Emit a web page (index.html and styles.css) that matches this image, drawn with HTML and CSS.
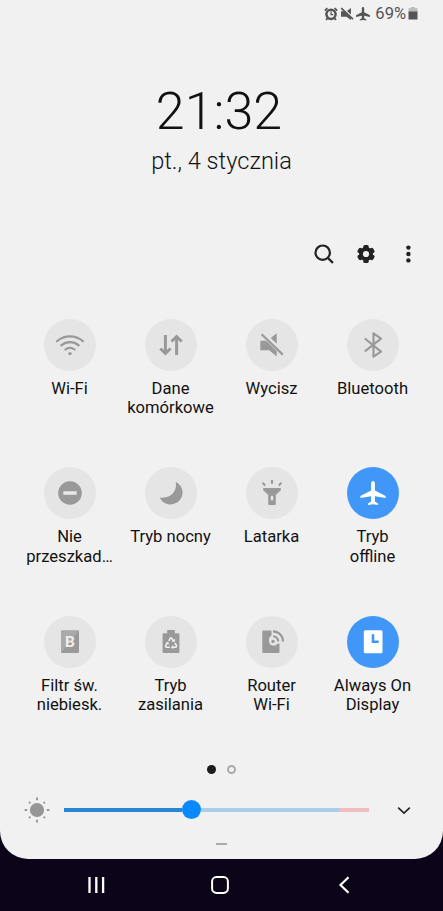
FILE: index.html
```html
<!DOCTYPE html>
<html lang="pl">
<head>
<meta charset="utf-8">
<title>Szybkie ustawienia</title>
<link rel="stylesheet" href="styles.css">
</head>
<body>
<main class="panel">
  <header class="status">
    <svg width="14" height="14" viewBox="0 0 14 14"><circle cx="7" cy="7.3" r="4.6" fill="none" stroke="#555" stroke-width="2.5"/><path d="M.8 3.7 3.4 1.2M13.2 3.7l-2.6-2.5M3.4 11.3l-1.4 1.5M10.6 11.3l1.4 1.5" stroke="#555" stroke-width="1.8"/><path d="M7 4.6v3h2.2" fill="none" stroke="#555" stroke-width="1.2"/></svg>
    <svg width="14" height="14" viewBox="0 0 14 14"><path d="M1 4.3h3l7 7V13L6.5 9.7H1zM7 4l4-3v6.5z" fill="#555"/><path d="M1.2 1.2 13 12.2" stroke="#555" stroke-width="1.7"/></svg>
    <svg width="14" height="14" viewBox="13 13 26 26"><path d="M26 13c-1.5 0-2.2 1.2-2.2 2.8v7.1L13 28.4v3l10.8-2v4.5L20 36.1v2.2l6-1 6 1v-2.2l-3.8-2.2v-4.5l10.8 2v-3l-10.8-5.5v-7.1c0-1.6-.7-2.8-2.2-2.8z" fill="#555"/></svg>
    <span class="percent">69%</span>
    <svg class="battery" width="10" height="13" viewBox="0 0 10 13"><path d="M3 0h4v1.3h2.5V5h-9V1.3H3z" fill="#bbb"/><path d="M.5 4.5h9v8h-9z" fill="#555"/></svg>
  </header>
  <div class="clock">21:32</div>
  <div class="date">pt., 4 stycznia</div>
  <nav class="tools">
    <svg width="22" height="22" viewBox="0 0 22 22" fill="none" stroke="#222" stroke-width="2.2"><circle cx="9.7" cy="9.7" r="7.2"/><path d="m14.7 14.7 5.2 5.2"/></svg>
    <svg width="22" height="22" viewBox="0 0 22 22"><g fill="#222"><circle cx="11" cy="11" r="6.9"/><rect x="8.3" y="2.1" width="5.4" height="17.8" rx="1.5"/><rect x="8.3" y="2.1" width="5.4" height="17.8" rx="1.5" transform="rotate(60 11 11)"/><rect x="8.3" y="2.1" width="5.4" height="17.8" rx="1.5" transform="rotate(120 11 11)"/></g><circle cx="11" cy="11" r="3.1" fill="#f1f1f1"/></svg>
    <svg width="22" height="22" viewBox="0 0 22 22" fill="#222"><circle cx="11.4" cy="4.6" r="2.2"/><circle cx="11.4" cy="11" r="2.2"/><circle cx="11.4" cy="17.4" r="2.2"/></svg>
  </nav>
  <section class="tiles">
    <div class="tile"><svg class="icon" viewBox="0 0 52 52"><g fill="none" stroke="#999" stroke-width="2.2" stroke-linecap="round"><path d="M13 22.2c7.3-6.5 18.7-6.5 26 0M17.3 26.3c5-4.3 12.4-4.3 17.4 0M21.4 30.5c2.7-2.2 6.5-2.2 9.2 0"/></g><circle cx="26" cy="34.6" r="1.7" fill="#999"/></svg><span>Wi-Fi</span></div>
    <div class="tile"><svg class="icon" viewBox="0 0 52 52"><path d="M20.4 16v18M15.3 29.5l5.1 5 5.1-5M31.6 36V17.5M26.5 22.5l5.1-5 5.1 5" fill="none" stroke="#999" stroke-width="3"/></svg><span>Dane<br>komórkowe</span></div>
    <div class="tile"><svg class="icon" viewBox="0 0 52 52"><path d="M14.3 21.8h5.9L30.7 32v5.5l-7.4-6.2h-9zM24.8 19l5.9-4.8v10.5z" fill="#999"/><path d="M15.6 15.2 36.8 35.6" stroke="#999" stroke-width="2.2"/></svg><span>Wycisz</span></div>
    <div class="tile"><svg class="icon" viewBox="0 0 52 52"><path d="M17.8 19.5 34 32.6l-7.5 5V14.4l7.5 5.2-16.2 12.7" fill="none" stroke="#999" stroke-width="2.2" stroke-linejoin="round"/></svg><span>Bluetooth</span></div>

    <div class="tile"><svg class="icon" viewBox="0 0 52 52"><circle cx="26" cy="26" r="11.8" fill="#999"/><path d="M19.3 24.2h13.4v3.6H19.3z" fill="#e8e8e8"/></svg><span>Nie<br>przeszkad…</span></div>
    <div class="tile"><svg class="icon" viewBox="0 0 52 52"><path d="M30.7 14.8C35 17 37.6 21 37.6 25.6c0 6.5-5 11.8-11.8 11.8-4.8 0-9-2.6-11.1-7 10 1.7 18.1-5.5 16-15.6z" fill="#999"/></svg><span>Tryb nocny</span></div>
    <div class="tile"><svg class="icon" viewBox="0 0 52 52"><path d="M17.2 21h17.6v2.2l-5 4.7V37q0 1-1 1h-5.6q-1 0-1-1v-9.1l-5-4.7z" fill="#999"/><path d="M16.8 15.6l2.3 3M26 13v3.8M35.2 15.6l-2.3 3" stroke="#999" stroke-width="2.1"/><rect x="24.9" y="28.8" width="2.2" height="4.8" rx="1" fill="#e8e8e8"/></svg><span>Latarka</span></div>
    <div class="tile on"><svg class="icon" viewBox="0 0 52 52"><path d="M26 14c-1.3 0-1.9 1.2-1.9 2.8v6.6L13.4 29v2l10.7-1.7v5.2l-3.2 1.9v1.5l5.1-.7 5.1.7v-1.5l-3.2-1.9v-5.2L38.6 31v-2l-10.7-5.6v-6.6c0-1.6-.6-2.8-1.9-2.8z" fill="#fff"/></svg><span>Tryb<br>offline</span></div>

    <div class="tile"><svg class="icon" viewBox="0 0 52 52"><rect x="17" y="14.5" width="18" height="22.5" rx="1" fill="#999"/><path d="M17 37V15.5q0-1 1-1h17z" fill="#aaa"/><text class="letter" x="26" y="31" text-anchor="middle">B</text></svg><span>Filtr św.<br>niebiesk.</span></div>
    <div class="tile"><svg class="icon" viewBox="0 0 52 52"><path d="M22.2 14h7.6v3.3h3.6q1 0 1 1V36q0 1-1 1H18.6q-1 0-1-1V18.3q0-1 1-1h3.6z" fill="#999"/><path d="M23.8 25l1.3-2.6q.9-1.2 1.8 0l1.4 2.6M30 26.8l1.4 2.8q.4 1.5-1 1.6h-2.8M24.8 31.2h-3.2q-1.4-.4-.9-1.7l1.6-2.8" fill="none" stroke="#eee" stroke-width="1.6"/><path d="M26.5 25.5l3.3.4.4-3.1zM28.2 29v4.3l-2.3-2.1zM20.5 27l2.8-1.3.8 3z" fill="#eee"/></svg><span>Tryb<br>zasilania</span></div>
    <div class="tile"><svg class="icon" viewBox="0 0 52 52"><path d="M17.3 14.4h8.2v5.3c-3.2.8-3.8 8 .2 9.6 2 .8 4.5.3 5.7-1.5h2.1V36q0 1-1 1H17.3q-1 0-1-1V15.4q0-1 1-1z" fill="#999"/><circle cx="27" cy="25.4" r="1.7" fill="#999"/><path d="M27 20.2a5.2 5.2 0 0 1 5.2 5.2M27 15.4a10 10 0 0 1 10 10" fill="none" stroke="#999" stroke-width="2.1"/></svg><span>Router<br>Wi-Fi</span></div>
    <div class="tile on"><svg class="icon" viewBox="0 0 52 52"><rect x="16.8" y="14.3" width="18.7" height="23" rx="1.5" fill="#fff"/><path d="M26 18.2v7.6h5.7" fill="none" stroke="#4197f7" stroke-width="2.6"/></svg><span>Always On<br>Display</span></div>
  </section>
  <div class="pages"><i class="dot current"></i><i class="dot"></i></div>
  <div class="brightness">
    <svg width="26" height="26" viewBox="0 0 26 26"><circle cx="13" cy="13" r="7.1" fill="#969696"/><path d="M13 .6v2.6M13 22.8v2.6M.6 13h2.6M22.8 13h2.6M5 5l1.4 1.4M19.6 19.6 21 21M5 21l1.4-1.4M19.6 6.4 21 5" stroke="#969696" stroke-width="1.9"/></svg>
    <div class="track"><i class="fill"></i><i class="thumb"></i><i class="rest"></i><i class="hot"></i></div>
    <svg class="chevron" width="14" height="10" viewBox="0 0 14 10"><path d="m1.2 2.6 5.8 5.6 5.8-5.6" fill="none" stroke="#222" stroke-width="1.6"/></svg>
  </div>
  <i class="handle"></i>
</main>
<footer class="navbar">
  <svg width="18" height="18" viewBox="0 0 18 18"><path d="M2.5 1v16M9.3 1v16M16.1 1v16" stroke="#fff" stroke-width="2.3"/></svg>
  <svg width="18" height="18" viewBox="0 0 18 18"><rect x="1.1" y="1.1" width="15.8" height="15.8" rx="4.3" fill="none" stroke="#fff" stroke-width="2"/></svg>
  <svg width="18" height="18" viewBox="0 0 18 18"><path d="M13.5 1.2 5.5 9l8 7.8" fill="none" stroke="#fff" stroke-width="2.2"/></svg>
</footer>
</body>
</html>
```
FILE: styles.css
```css
* { box-sizing: border-box; }
body {
  margin: 0;
  width: 443px;
  height: 911px;
  overflow: hidden;
  background: #0c0418;
  color: #111;
  font-family: Roboto, "Noto Sans", sans-serif;
}
svg { display: block; flex: none; }
.panel {
  height: 859px;
  background: #f1f1f1;
  border-radius: 0 0 28px 28px;
}
.status {
  display: flex;
  align-items: center;
  justify-content: flex-end;
  gap: 2px;
  height: 27px;
  padding-right: 25px;
}
.percent { margin-left: 3px; color: #555; font-size: 16.5px; line-height: 28px; }
.clock {
  margin-top: 55px;
  height: 60px;
  font-size: 52px;
  font-weight: 300;
  line-height: 60px;
  text-align: center;
  padding-right: 5px;
}
.date {
  margin-top: 4px;
  height: 30px;
  font-size: 23.6px;
  font-weight: 300;
  line-height: 30px;
  text-align: center;
}
.tools {
  display: flex;
  justify-content: flex-end;
  gap: 20px;
  margin-top: 67px;
  padding-right: 24px;
}
.tiles {
  display: grid;
  grid-template-columns: repeat(4, 101px);
  grid-template-rows: repeat(3, 148.7px);
  margin: 53.5px 0 0 19px;
}
.tile {
  display: flex;
  flex-direction: column;
  align-items: center;
  gap: 8px;
  font-size: 16.6px;
  line-height: 19.5px;
  text-align: center;
  white-space: nowrap;
}
.icon { width: 52px; height: 52px; border-radius: 50%; background: #e5e5e5; }
.on .icon { background: #4197f7; }
.letter { fill: #eee; font-size: 15.5px; font-weight: 700; }
.pages { display: flex; justify-content: center; gap: 11px; height: 9px; }
.dot { width: 9px; height: 9px; border: 2px solid #aaa; border-radius: 50%; }
.current { border: 0; background: #1c1c1c; }
.brightness { display: flex; align-items: center; height: 26px; margin-top: 23.4px; padding-left: 24px; }
.track { display: flex; align-items: center; width: 305px; margin-left: 14px; }
.fill { width: 118px; height: 4px; background: #2787d6; }
.thumb { width: 19px; height: 19px; border-radius: 50%; background: #0989fb; }
.rest { width: 138px; height: 4px; background: #aacde9; }
.hot { width: 30px; height: 4px; background: #efbdc0; }
.chevron { margin-left: 28px; }
.handle { display: block; width: 11px; height: 2px; margin: 20px auto 0; background: #aaa; }
.navbar { display: flex; justify-content: center; align-items: center; gap: 106px; height: 52px; padding-right: 3px; }
```
